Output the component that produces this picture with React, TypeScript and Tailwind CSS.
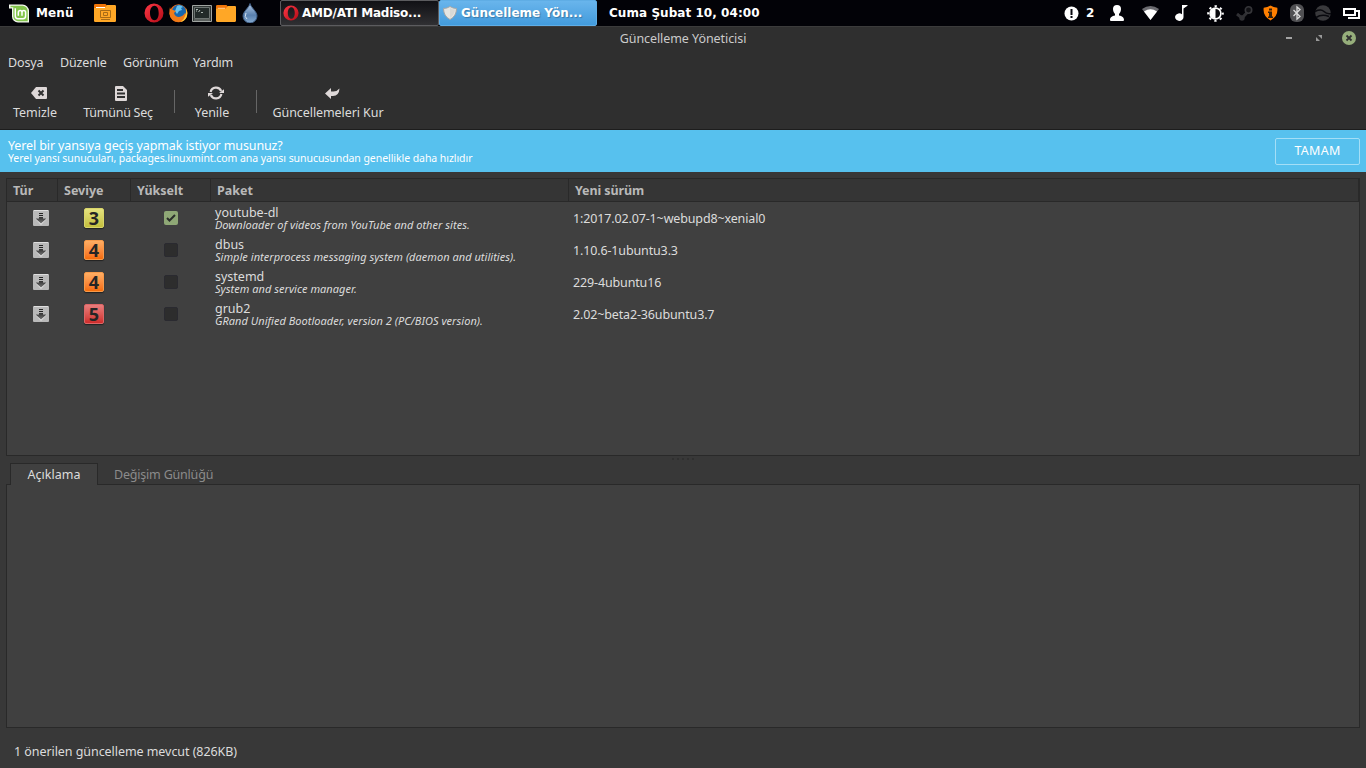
import type { ReactNode } from 'react'

interface Package {
  name: string
  description: string
  version: string
  level: number
  checked: boolean
}

const packages: Package[] = [
  {
    name: 'youtube-dl',
    description: 'Downloader of videos from YouTube and other sites.',
    version: '1:2017.02.07-1~webupd8~xenial0',
    level: 3,
    checked: true,
  },
  {
    name: 'dbus',
    description: 'Simple interprocess messaging system (daemon and utilities).',
    version: '1.10.6-1ubuntu3.3',
    level: 4,
    checked: false,
  },
  {
    name: 'systemd',
    description: 'System and service manager.',
    version: '229-4ubuntu16',
    level: 4,
    checked: false,
  },
  {
    name: 'grub2',
    description: 'GRand Unified Bootloader, version 2 (PC/BIOS version).',
    version: '2.02~beta2-36ubuntu3.7',
    level: 5,
    checked: false,
  },
]

const levelColors: Record<number, string> = {
  3: 'from-[#e5e27e] to-[#c5c03c] border-[#d9d56a]',
  4: 'from-[#ffae63] to-[#f56c05] border-[#f79a4a]',
  5: 'from-[#e87c7c] to-[#cf2b2b] border-[#dd6666]',
}

function MintLogo() {
  return (
    <svg width="21" height="19" viewBox="0 0 21 19">
      <path d="M0 .5h13.500a6.500 6.500 0 0 1 6.500 6.500v11.500H9a6 6 0 0 1-6-6V4.500H0z" fill="#f4f8ef" />
      <path d="M1.500 1.800h12a5.200 5.200 0 0 1 5.200 5.200v10.200H9a4.700 4.700 0 0 1-4.700-4.700V3.300H1.500z" fill="#83c54c" />
      <path d="M6.300 4.300v7.700q0 2.700 2.700 2.700h5q2.600 0 2.600-2.700V8.600q0-2-1.800-2t-1.800 2v3.200M13 8.600q0-2-1.800-2t-1.900 2v3.200" fill="none" stroke="#fff" strokeWidth="1.500" />
    </svg>
  )
}

function Folder({ desktop = false }: { desktop?: boolean }) {
  return (
    <svg width={desktop ? 22 : 20} height={desktop ? 18 : 17} viewBox="0 0 22 18" preserveAspectRatio="none">
      <path d="M0 2V1.300Q0 0 1.300 0h10.200L13 1.500V6H0z" fill="#ef7408" />
      <path d="M0 4h10.500L13 1h7.800Q22 1 22 2.200v14.600q0 1.200-1.200 1.200H1.200Q0 18 0 16.800z" fill="#ffa726" />
      {!desktop && <path d="M2 3.500h8" stroke="#ffd4a0" />}
      {desktop && (
        <>
          <path d="M2 3.500h9" stroke="#fff" />
          <path d="M6.500 6.500h10v7h-10zM7 15.500h9" fill="none" stroke="#a66b17" />
          <path d="M9.500 8.500h4v3h-4z" fill="none" stroke="#a66b17" />
        </>
      )}
    </svg>
  )
}

function Opera({ size = 20 }: { size?: number }) {
  return (
    <svg width={size} height={size} viewBox="0 0 20 20">
      <defs>
        <linearGradient id="opera" x1="0" y1="0" x2="1" y2="1">
          <stop offset="0" stopColor="#ff3846" />
          <stop offset="1" stopColor="#b10b16" />
        </linearGradient>
      </defs>
      <path fillRule="evenodd" fill="url(#opera)" d="M10 .5a9.500 9.500 0 1 1 0 19a9.500 9.500 0 0 1 0-19M10.500 2.800C7.900 2.800 6 5.800 6 10s1.900 7.200 4.500 7.200 4.200-3 4.200-7.200-1.600-7.200-4.200-7.200" />
    </svg>
  )
}

function Firefox() {
  return (
    <svg width="19" height="19" viewBox="0 0 19 19">
      <circle cx="9.500" cy="9.300" r="9" fill="#e96915" />
      <circle cx="10" cy="7.800" r="7" fill="#1768ae" />
      <path d="M8 2q3-2 6 1l-2 1 1 2-3 1-2 3-2-3z" fill="#68c3ee" />
      <path d="M1 3q0 2 1.500 2.500L7 7 5 9q1 4 5 4 4-.500 6-4l1.500 2q-2 7-8 7Q1.500 17 .5 10 .2 6 1 3" fill="#f07b18" />
      <path d="M17 4q2 4 1 8-1.500 5-6.500 6 4-3 5-7 1-3 .5-7" fill="#ffca38" />
    </svg>
  )
}

function Terminal() {
  return (
    <svg width="20" height="17" viewBox="0 0 20 17">
      <path d="M.5.5h19v16H.5z" fill="#303635" stroke="#a0a4a1" />
      <path d="M2.500 2.500h15v11h-15z" fill="#222a29" stroke="#6c7371" />
      <path d="M4 4.500h2M4 6h1m1.500 1 1.500-2M9 7.500h2" stroke="#aeb8b3" />
      <path d="M2 15h16" stroke="#868a87" />
    </svg>
  )
}

function Drop() {
  return (
    <svg width="16" height="20" viewBox="0 0 16 20">
      <defs>
        <linearGradient id="drop" x1="0" y1="0" x2="0" y2="1">
          <stop offset="0" stopColor="#b7cde5" />
          <stop offset=".6" stopColor="#587fae" />
          <stop offset="1" stopColor="#86abd1" />
        </linearGradient>
      </defs>
      <path d="M8 .5C8.800 4.500 15 8.500 15 13a6.500 6.500 0 0 1-14 0C1 8.500 7.200 4.500 8 .5" fill="url(#drop)" stroke="#405f87" />
      <path d="M4 10q-2 4 1 6" stroke="#d5e3f1" fill="none" />
    </svg>
  )
}

function Shield() {
  return (
    <svg width="14" height="14" viewBox="0 0 14 14">
      <path d="M7 .5q3 2 6.500 2Q13.500 10 7 13.500.5 10 .5 2.500 4 2.500 7 .5" fill="#e5e5e2" stroke="#a5a7a7" />
      <path d="M7 2v10q4.500-3 5-8.500Q9 3.500 7 2" fill="#d8d9d6" />
    </svg>
  )
}

function Tray() {
  return (
    <div className="flex h-[26px] items-center text-white">
      <svg width="15" height="15" viewBox="0 0 15 15">
        <circle cx="7.500" cy="7.500" r="7" fill="#fff" />
        <path d="M6.500 3h2v6h-2zm0 7h2v2h-2z" fill="#090910" />
      </svg>
      <span className="ml-[7px] w-[24px] text-[12px] font-bold">2</span>
      <svg width="14" height="16" viewBox="0 0 14 16" fill="#fff">
        <path d="M3 4a4 4 0 1 1 8 0c0 2-1 4-2 5v1.500c3 .7 5 1.500 5 4.500q0 1-1 1H1q-1 0-1-1c0-3 2-3.800 5-4.500V9C4 8 3 6 3 4" />
      </svg>
      <svg className="ml-[18px]" width="17" height="14" viewBox="0 0 17 14">
        <path d="M0 3Q8.500-3 17 3L8.500 14z" fill="#6b6b70" />
        <path d="M2 5.500Q8.500 1 15 5.500L8.500 14z" fill="#fff" />
      </svg>
      <svg className="ml-[16px]" width="14" height="16" viewBox="0 0 14 16" fill="#fff">
        <path d="M7 0h5.500v.8L8.500 3.500v8.500a4.200 3.800 0 1 1-1.500-2.800z" />
      </svg>
      <svg className="ml-[18px]" width="17" height="17" viewBox="0 0 17 17">
        <circle cx="8.500" cy="8.500" r="7.300" fill="none" stroke="#fff" strokeWidth="2" strokeDasharray="2.300 3.430" strokeDashoffset="1.150" />
        <circle cx="8.500" cy="8.500" r="5.400" fill="#08080c" stroke="#fff" strokeWidth="1.600" />
        <path d="M8.500 3.500a5 5 0 0 0 0 10z" fill="#fff" />
      </svg>
      <svg className="ml-[12px]" width="17" height="15" viewBox="0 0 17 15">
        <path d="m1 8 5 4 6.500-7" fill="none" stroke="#303034" strokeWidth="3" />
        <circle cx="12.500" cy="4" r="3.200" fill="#101014" stroke="#36363a" strokeWidth="1.600" />
        <circle cx="6" cy="12" r="2.700" fill="#303034" />
      </svg>
      <svg className="ml-[10px]" width="15" height="16" viewBox="0 0 15 16">
        <path d="M7.500.5q3 2 6.800 2.200Q15.500 11 7.500 15.500-.5 11 .7 2.700 4.500 2.500 7.500.5" fill="#ff7f00" />
        <path d="M6 3.500h3v2H6zM5 6.500h4v5h1v1.500H5v-1.500h1V8H5z" fill="#33200d" />
      </svg>
      <svg className="ml-[12px]" width="14" height="18" viewBox="0 0 14 18">
        <rect width="14" height="18" rx="6" fill="#505053" />
        <path d="m3.500 6 6.500 6.500L7 15V3l3 2.500L3.500 12" fill="none" stroke="#ddd" strokeWidth="1.300" />
      </svg>
      <svg className="ml-[11px]" width="16" height="16" viewBox="0 0 16 16">
        <circle cx="8" cy="8" r="7.800" fill="#39393c" />
        <path d="M0 6.500q6-3 9 0t7 2M1 12.500q6-4 13-1" fill="none" stroke="#09090e" strokeWidth="1.600" />
      </svg>
      <svg className="ml-[12px]" width="17" height="13" viewBox="0 0 17 13" fill="none" stroke="#fff" strokeWidth="2">
        <path d="M1 2h11v6H1zM13 4h3v7H5" />
      </svg>
    </div>
  )
}

function Panel() {
  return (
    <header className="flex h-[26px] items-center bg-[#020207] font-['DejaVu_Sans',sans-serif] text-[12px] font-bold text-white">
      <div className="flex w-[94px] items-center pl-[9px]">
        <MintLogo />
        <span className="ml-[6px] tracking-[0.1px]">Menü</span>
      </div>
      <div className="flex w-[186px] items-center">
        <Folder desktop />
        <div className="ml-[28px] flex items-center">
          <Opera />
          <div className="ml-[5px]">
            <Firefox />
          </div>
          <div className="ml-[4px]">
            <Terminal />
          </div>
          <div className="ml-[4px]">
            <Folder />
          </div>
          <div className="ml-[6px]">
            <Drop />
          </div>
        </div>
      </div>
      <div className="flex h-[26px] w-[159px] items-center rounded-[2px] border border-[#5c5c5f] bg-linear-to-b from-[#111115] to-[#303033] pl-[2px]">
        <Opera size={16} />
        <span className="ml-[3px] tracking-[-0.2px]">AMD/ATI Madiso...</span>
      </div>
      <div className="flex h-[26px] w-[158px] items-center rounded-[2px] border border-[#5fade5] bg-linear-to-b from-[#69b5ec] to-[#429bdc] pl-[3px]">
        <Shield />
        <span className="ml-[4px] [text-shadow:1px_1px_1px_#397aa9]">Güncelleme Yön...</span>
      </div>
      <span className="ml-[12px] tracking-[0.05px]">Cuma Şubat 10, 04:00</span>
      <div className="ml-auto pr-[6px]">
        <Tray />
      </div>
    </header>
  )
}

function TitleBar() {
  return (
    <div className="grid h-[25px] grid-cols-[1fr_auto_1fr] items-center border-t border-[#3b3b3b] text-[#cbcbcb]">
      <div />
      <span className="tracking-[-0.07px]">Güncelleme Yöneticisi</span>
      <div className="flex items-center justify-end pr-[10px] pb-[3px]">
        <div className="h-[2px] w-[6px] bg-[#a4a4a4]" />
        <svg className="ml-[24px]" width="6" height="6" viewBox="0 0 6 6" fill="#999">
          <path d="M2 0h4v4zM0 2v4h4z" />
        </svg>
        <svg className="ml-[20px]" width="14" height="14" viewBox="0 0 14 14">
          <circle cx="7" cy="7" r="7" fill="#96ae7b" />
          <path d="m4.500 4.500 5 5m0-5-5 5" stroke="#303030" strokeWidth="1.800" />
        </svg>
      </div>
    </div>
  )
}

function ToolButton({ icon, children, className }: { icon: ReactNode; children: ReactNode; className: string }) {
  return (
    <button className={`flex flex-col items-center whitespace-nowrap ${className}`}>
      <span className="flex h-[18px] items-center">{icon}</span>
      <span className="pt-px leading-[20px]">{children}</span>
    </button>
  )
}

function Toolbar() {
  return (
    <div className="flex h-[55px] border-b border-[#1d1d1d] pt-[9px] pl-[13px]">
      <ToolButton
        className="w-[44px]"
        icon={
          <svg className="translate-x-[4px]" width="16" height="12" viewBox="0 0 16 12">
            <path d="M0 6 5 0h10q1 0 1 1v10q0 1-1 1H5z" fill="#ded8d8" />
            <path d="m7.500 3.500 5 5m0-5-5 5" stroke="#303030" strokeWidth="2" />
          </svg>
        }
      >
        <span className="tracking-[-0.05px]">Temizle</span>
      </ToolButton>
      <ToolButton
        className="ml-[26px] w-[70px]"
        icon={
          <svg className="translate-x-[3px]" width="12" height="15" viewBox="0 0 12 15">
            <path d="M0 1q0-1 1-1h7l4 4v10q0 1-1 1H1q-1 0-1-1z" fill="#ded8d8" />
            <path d="M2 4h6M2 7.500h8M2 11h8" stroke="#303030" strokeWidth="1.800" />
          </svg>
        }
      >
        <span className="tracking-[-0.25px]">Tümünü Seç</span>
      </ToolButton>
      <div className="mt-[6px] ml-[21px] h-[23px] w-px bg-[#666]" />
      <ToolButton
        className="ml-[19px] w-[36px]"
        icon={
          <svg className="translate-x-[4px]" width="16" height="14" viewBox="0 0 16 14">
            <path d="M2.600 6a5.600 5.600 0 0 1 10.600-1M13.400 8a5.600 5.600 0 0 1-10.600 1" fill="none" stroke="#ded8d8" strokeWidth="2.200" />
            <path d="M16 3.200V7h-5zM0 10.800V7h5z" fill="#ded8d8" />
          </svg>
        }
      >
        <span className="tracking-[-0.05px]">Yenile</span>
      </ToolButton>
      <div className="mt-[6px] ml-[26px] h-[23px] w-px bg-[#666]" />
      <ToolButton
        className="ml-[15px] w-[112px]"
        icon={
          <svg className="translate-x-[4px]" width="15" height="11" viewBox="0 0 15 11" fill="#ded8d8">
            <path d="M0 5.500 6 0v3.500h2.500Q12 3.500 14.500.5 14 8 8 8H6v3z" />
          </svg>
        }
      >
        <span className="tracking-[-0.08px]">Güncellemeleri Kur</span>
      </ToolButton>
    </div>
  )
}

function DownloadIcon() {
  return (
    <svg width="16" height="16" viewBox="0 0 16 16">
      <defs>
        <linearGradient id="arrow" x1="0" y1="0" x2="0" y2="1">
          <stop offset="0" stopColor="#333" />
          <stop offset="1" stopColor="#777" />
        </linearGradient>
      </defs>
      <rect width="16" height="16" rx="1" fill="#b9b9b9" />
      <path d="M1 .5h14" stroke="#dedede" />
      <path d="M2 8.500h12l-6 6.500z" fill="#e2e2e2" />
      <path d="M6 3.500h4M6 5.500h4" stroke="#252525" />
      <path d="M6 7h4v1.500h3.500L8 13.500 2.500 8.500H6z" fill="url(#arrow)" />
    </svg>
  )
}

function PackageRow({ item }: { item: Package }) {
  return (
    <div className="grid h-[32px] grid-cols-[51px_73px_80px_358px_1fr] items-center">
      <div className="pl-[26px]">
        <DownloadIcon />
      </div>
      <div className="pl-[26px]">
        <div
          className={`flex h-[20px] w-[20px] items-center justify-center rounded-[2px] border bg-linear-to-b text-[18px] leading-none font-bold text-[#252525] shadow-[0_1px_1px_#222] ${levelColors[item.level]}`}
        >
          {item.level}
        </div>
      </div>
      <div className="pl-[33px]">
        <div className={`flex h-[14px] w-[14px] items-center justify-center rounded-[2px] ${item.checked ? 'bg-[#8fa876]' : 'border border-[#2a2a30] bg-[#2d2d2d]'}`}>
          {item.checked && (
            <svg width="10" height="8" viewBox="0 0 10 8">
              <path d="m1 4 2.500 2.500L9 1" fill="none" stroke="#2b2f2b" strokeWidth="2" />
            </svg>
          )}
        </div>
      </div>
      <div className="pl-[4px] whitespace-nowrap">
        <div className="h-[14px] pt-px leading-[14px]">{item.name}</div>
        <div className="h-[12px] text-[11px] leading-[12px] tracking-[0.03px] italic">{item.description}</div>
      </div>
      <div className="pt-[2px] pl-[4px] tracking-[-0.14px]">{item.version}</div>
    </div>
  )
}

function PackageTable() {
  return (
    <div className="h-[278px] border border-[#292929] bg-[#404040]">
      <div className="grid h-[23px] grid-cols-[51px_73px_80px_358px_1fr] items-stretch border-b border-[#292929] bg-[#353535] leading-[23px] font-bold text-[#b9b9b9]">
        <div className="border-r border-[#292929] pl-[6px]">Tür</div>
        <div className="border-r border-[#292929] pl-[6px]">Seviye</div>
        <div className="border-r border-[#292929] pl-[6px]">Yükselt</div>
        <div className="border-r border-[#292929] pl-[6px]">Paket</div>
        <div className="border-r border-[#292929] pl-[6px] tracking-[-0.1px]">Yeni sürüm</div>
      </div>
      {packages.map((item) => (
        <PackageRow key={item.name} item={item} />
      ))}
    </div>
  )
}

export default function App() {
  return (
    <div className="flex h-[768px] w-[1366px] flex-col overflow-hidden bg-[#383838] font-['Noto_Sans',sans-serif] text-[12.5px] text-[#dcdcdc]">
      <Panel />
      <div className="h-[104px] bg-[#2f2f2f]">
        <TitleBar />
        <nav className="flex h-[24px] items-center pl-[8px] tracking-[-0.15px]">
          <span className="w-[52px]">Dosya</span>
          <span className="w-[63px]">Düzenle</span>
          <span className="w-[70px]">Görünüm</span>
          <span>Yardım</span>
        </nav>
        <Toolbar />
      </div>
      <div className="flex h-[42px] items-center justify-between bg-[#57c1ee] pr-[6px] pl-[8px] text-white">
        <div>
          <div className="h-[14px] pt-px leading-[14px] tracking-[-0.12px]">Yerel bir yansıya geçiş yapmak istiyor musunuz?</div>
          <div className="h-[12px] text-[10.5px] leading-[12px] tracking-[-0.06px]">
            Yerel yansı sunucuları, packages.linuxmint.com ana yansı sunucusundan genellikle daha hızlıdır
          </div>
        </div>
        <button className="h-[27px] w-[85px] rounded-[2px] border border-[#a4def6] tracking-[0.3px]">TAMAM</button>
      </div>
      <main className="px-[6px] pt-[6px]">
        <PackageTable />
        <div className="flex h-[7px] justify-center gap-[3px] pt-[2px]">
          {[0, 1, 2, 3, 4].map((dot) => (
            <span key={dot} className="h-[2px] w-[2px] bg-[#303030]" />
          ))}
        </div>
        <div className="flex h-[21px] items-stretch pl-[4px] leading-[22px]">
          <div className="z-10 -mb-px w-[88px] border border-b-0 border-[#292929] bg-[#404040] text-center">Açıklama</div>
          <div className="ml-[16px] pt-px tracking-[-0.2px] text-[#8b8b8b]">Değişim Günlüğü</div>
        </div>
        <div className="h-[244px] border border-[#292929] bg-[#404040]" />
      </main>
      <footer className="flex h-[40px] items-center pt-[8px] pl-[14px] tracking-[-0.06px]">1 önerilen güncelleme mevcut (826KB)</footer>
    </div>
  )
}
